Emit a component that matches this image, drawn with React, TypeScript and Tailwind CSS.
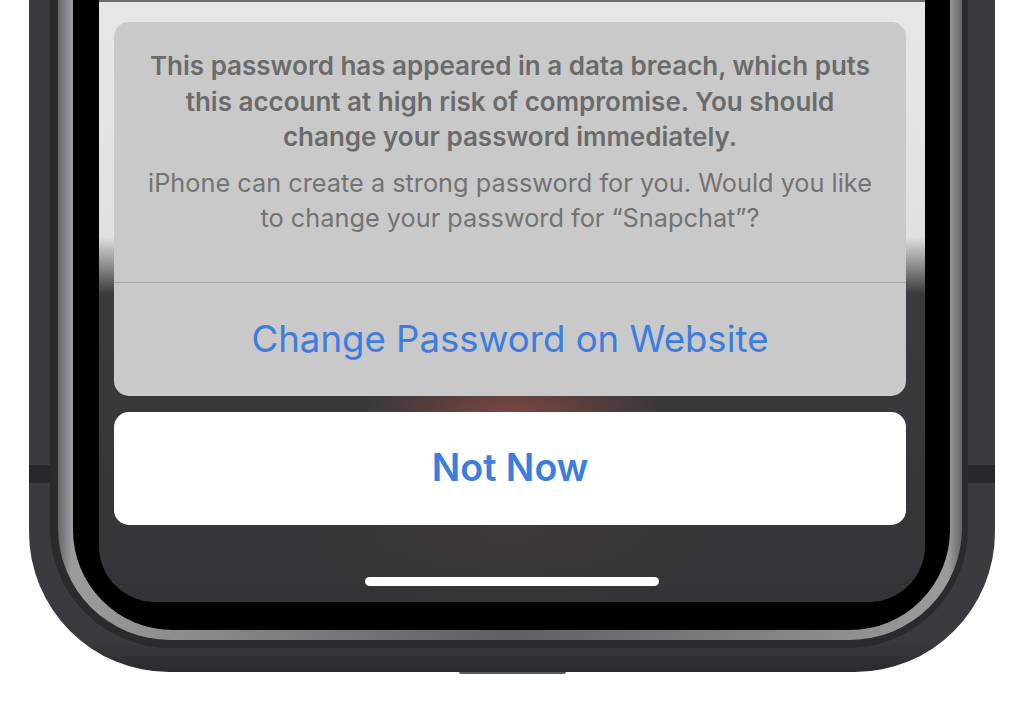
export default function App() {
  return (
    <div className="w-full h-[702px] bg-white overflow-hidden px-[29px] font-['Inter',sans-serif]">
      {/* outer frame */}
      <div className="h-[672px] flex flex-col rounded-b-[140px] pl-[21px] pr-[27px] pb-[24px] bg-[linear-gradient(to_bottom,#3b3a3f_465px,#28272b_465px,#28272b_483px,#3b3a3f_483px,#3b3a3f_640px,#2a292d)]">
        <div className="flex-1 flex flex-col rounded-b-[120px] pl-[8px] pr-[6px] pb-[8px] bg-[#2b2a2e]">
          <div className="flex-1 flex flex-col rounded-b-[112px] pl-[15px] pr-[12px] pb-[10px] bg-[linear-gradient(to_right,#66666a,#9c9c9f_1.5%,#5f5f63_50%,#9c9c9f_98.5%,#66666a)]">
            <div className="flex-1 flex flex-col rounded-b-[100px] pl-[26px] pr-[25px] pb-[28px] bg-black">
              <Screen />
            </div>
          </div>
        </div>
      </div>
      <div className="mx-auto w-[107px] h-[2px] rounded-b-full bg-[#5a5a5e]" />
    </div>
  )
}

const Screen = () => {
  return (
    <div className="flex-1 flex flex-col rounded-b-[56px] border-t-2 border-[#6e6e6e] pt-[20px] bg-[radial-gradient(ellipse_150px_45px_at_50%_68%,#7a4541,transparent),radial-gradient(ellipse_200px_80px_at_50%_88%,#3f3936,transparent),linear-gradient(to_bottom,#e7e7e7_0px,#e0e0e0_235px,#3b3a3e_292px,#343337)]">
      <div className="ml-[15px] mr-[19px]">
        <div className="rounded-[15px] bg-[#c9c9c9] overflow-hidden">
          <div className="h-[260px] pt-[26px] text-center whitespace-nowrap">
            <p className="text-[26px] font-semibold leading-[35.5px] text-[#6b6b6b]">
              This password has appeared in a data breach, which puts<br />
              this account at high risk of compromise. You should<br />
              change your password immediately.
            </p>
            <p className="mt-[10px] text-[25.3px] leading-[35px] text-[#737373]">
              iPhone can create a strong password for you. Would you like<br />
              to change your password for “Snapchat”?
            </p>
          </div>
          <div className="h-px bg-[#a9a9a9]" />
          <div className="h-[113px] flex items-center justify-center text-[36.6px] text-[#3b7de0]">
            Change Password on Website
          </div>
        </div>
        <div className="mt-[16px] h-[113px] rounded-[15px] bg-white flex items-center justify-center text-[37.6px] font-semibold text-[#3b7de0]">
          Not Now
        </div>
      </div>
      <div className="mt-[52px] mx-auto w-[294px] h-[9px] rounded-full bg-white" />
    </div>
  )
}
